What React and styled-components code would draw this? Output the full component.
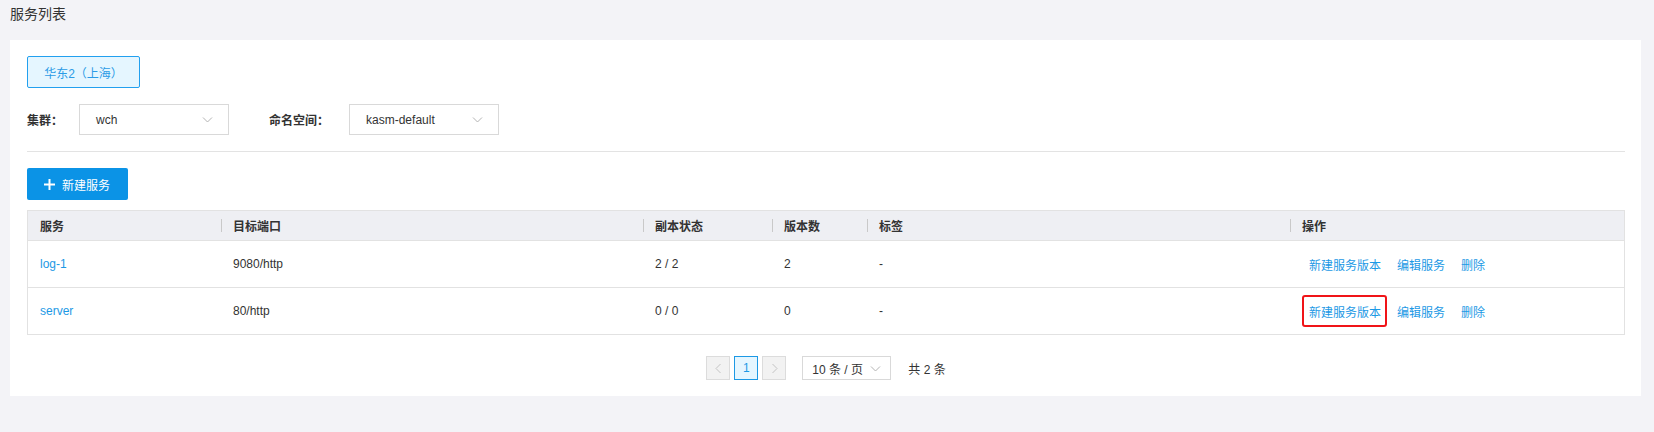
import React from 'react';
import styled, { createGlobalStyle } from 'styled-components';

const GlobalStyle = createGlobalStyle`
  body {
    margin: 0;
    background: #f3f3f7;
    font-family: "Liberation Sans", "Noto Sans CJK SC", sans-serif;
    color: #333;
  }
`;

const Page = styled.div`
  width: 1654px;
  height: 432px;
  padding: 0 13px 0 10px;
  box-sizing: border-box;
`;

const PageTitle = styled.h1`
  margin: 0;
  height: 40px;
  padding-top: 5px;
  box-sizing: border-box;
  font-size: 14px;
  font-weight: normal;
  line-height: 18px;
  color: #333;
`;

const Card = styled.div`
  background: #fff;
  padding: 16px 16px 16px 17px;
  height: 356px;
  box-sizing: border-box;
`;

const RegionButton = styled.button`
  width: 113px;
  height: 32px;
  border: 1px solid #22a0ef;
  border-radius: 2px;
  background: #e5f6ff;
  color: #2b9be6;
  font-family: inherit;
  font-size: 12px;
  padding: 0;
  cursor: pointer;
`;

const FilterRow = styled.div`
  display: flex;
  align-items: center;
  margin-top: 16px;
  padding-bottom: 16px;
  border-bottom: 1px solid #e3e3e3;
`;

const FilterLabel = styled.span`
  font-size: 12px;
  font-weight: bold;
  color: #333;
  margin-right: ${p => p.$gap || 16}px;
`;

const Select = styled.div`
  display: flex;
  align-items: center;
  justify-content: space-between;
  width: ${p => p.$width || 150}px;
  height: ${p => p.$height || 31}px;
  box-sizing: border-box;
  border: 1px solid #d9d9d9;
  padding: 0 ${p => p.$padRight || 15}px 0 ${p => p.$padLeft || 16}px;
  font-size: 12px;
  color: #333;
  margin-left: ${p => p.$offset || 0}px;
  margin-right: ${p => p.$gap || 0}px;
  background: #fff;
`;

const Chevron = ({ dir = 'down', size = 11, color = '#b4b4b4' }) => {
  const d = {
    down: 'M1 3.5 L5.5 8 L10 3.5',
    left: 'M7.5 1 L3 5.5 L7.5 10',
    right: 'M3.5 1 L8 5.5 L3.5 10',
  }[dir];
  return (
    <svg width={size} height={size} viewBox="0 0 11 11" fill="none">
      <path d={d} stroke={color} strokeWidth="1" />
    </svg>
  );
};

const PrimaryButton = styled.button`
  display: flex;
  align-items: center;
  gap: 7px;
  margin-top: 16px;
  width: 101px;
  height: 32px;
  padding: 0 0 0 17px;
  border: none;
  border-radius: 2px;
  background: #0b93e6;
  color: #fff;
  font-family: inherit;
  font-size: 12px;
  cursor: pointer;
`;

const Table = styled.div`
  margin-top: 10px;
  border: 1px solid #e2e2e2;
`;

const Row = styled.div`
  display: grid;
  grid-template-columns: 193px 422px 129px 95px 423px 1fr;
  height: ${p => (p.$head ? 29 : 46)}px;
  background: ${p => (p.$head ? '#eeeff3' : '#fff')};
  border-top: ${p => (p.$head ? 'none' : '1px solid #e2e2e2')};
`;

const Cell = styled.div`
  display: flex;
  align-items: center;
  padding-left: ${p => p.$pad || 12}px;
  font-size: 12px;
  font-weight: ${p => (p.$head ? 'bold' : 'normal')};
  color: #333;
  position: relative;

  ${p =>
    p.$sep &&
    `&::before {
      content: '';
      position: absolute;
      left: 0;
      top: 8px;
      height: 13px;
      width: 1px;
      background: #c9c9c9;
    }`}
`;

const Link = styled.a`
  color: #1c99e5;
  font-size: 12px;
  text-decoration: none;
  cursor: pointer;
  position: relative;
  margin-right: 16px;

  ${p =>
    p.$marked &&
    `&::after {
      content: '';
      position: absolute;
      left: -7px;
      right: -6px;
      top: -8px;
      bottom: -7px;
      border: 2px solid #f01418;
      border-radius: 3px;
    }`}
`;

const Pagination = styled.div`
  display: flex;
  justify-content: center;
  align-items: center;
  margin-top: 21px;
  font-size: 12px;
`;

const PageBox = styled.div`
  width: 24px;
  height: 24px;
  box-sizing: border-box;
  display: flex;
  align-items: center;
  justify-content: center;
  margin-right: 4px;
  border: 1px solid ${p => (p.$active ? '#1c99e5' : '#dcdcdc')};
  background: ${p => (p.$active ? '#e5f6ff' : '#f2f2f2')};
  color: ${p => (p.$active ? '#1c99e5' : '#333')};
  font-size: 12px;
`;

const Total = styled.span`
  margin-left: 17px;
  color: #333;
`;

const columns = ['服务', '目标端口', '副本状态', '版本数', '标签', '操作'];

const services = [
  { name: 'log-1', port: '9080/http', replicas: '2 / 2', versions: '2', tags: '-' },
  { name: 'server', port: '80/http', replicas: '0 / 0', versions: '0', tags: '-', marked: true },
];

const App = () => (
  <Page>
    <GlobalStyle />
    <PageTitle>服务列表</PageTitle>
    <Card>
      <RegionButton>华东2（上海）</RegionButton>
      <FilterRow>
        <FilterLabel>集群：</FilterLabel>
        <Select $gap={40}>
          wch
          <Chevron />
        </Select>
        <FilterLabel $gap={20}>命名空间：</FilterLabel>
        <Select>
          kasm-default
          <Chevron />
        </Select>
      </FilterRow>
      <PrimaryButton>
        <svg width="11" height="11" viewBox="0 0 11 11">
          <path d="M5.5 0 V11 M0 5.5 H11" stroke="#fff" strokeWidth="2" />
        </svg>
        新建服务
      </PrimaryButton>
      <Table>
        <Row $head>
          {columns.map((c, i) => (
            <Cell key={c} $head $sep={i > 0}>
              {c}
            </Cell>
          ))}
        </Row>
        {services.map(s => (
          <Row key={s.name}>
            <Cell>
              <Link>{s.name}</Link>
            </Cell>
            <Cell>{s.port}</Cell>
            <Cell>{s.replicas}</Cell>
            <Cell>{s.versions}</Cell>
            <Cell>{s.tags}</Cell>
            <Cell $pad={19}>
              <Link $marked={s.marked}>新建服务版本</Link>
              <Link>编辑服务</Link>
              <Link>删除</Link>
            </Cell>
          </Row>
        ))}
      </Table>
      <Pagination>
        <PageBox>
          <Chevron dir="left" color="#c4c4c4" />
        </PageBox>
        <PageBox $active>1</PageBox>
        <PageBox>
          <Chevron dir="right" color="#c4c4c4" />
        </PageBox>
        <Select $width={89} $height={24} $padLeft={9} $padRight={9} $offset={12}>
          10 条 / 页
          <Chevron />
        </Select>
        <Total>共 2 条</Total>
      </Pagination>
    </Card>
  </Page>
);

export default App;
